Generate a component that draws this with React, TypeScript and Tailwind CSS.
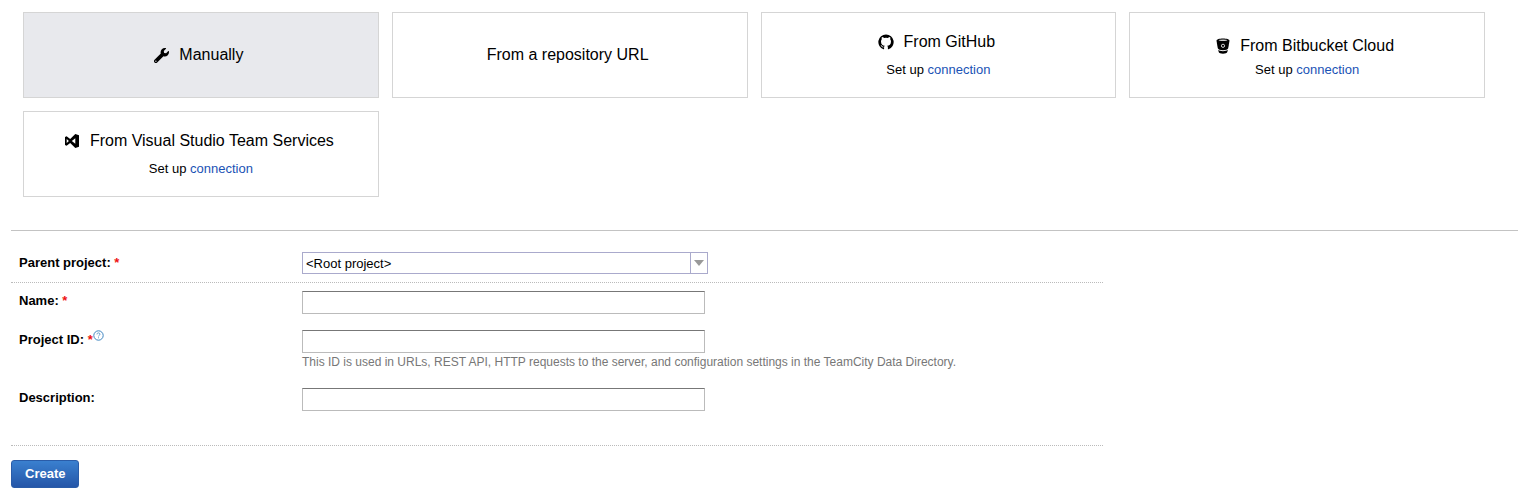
import type { ReactNode } from "react";
import { FaWrench } from "react-icons/fa";

function GitHubIcon() {
  return (
    <svg viewBox="0 0 16 16" className="size-4" aria-hidden="true">
      <path
        fill="currentColor"
        fillRule="evenodd"
        d="M8 .4a7.600 7.600 0 0 0-2.500 14.800c.4.100.6-.1.6-.5v-1.500c-1.900.4-2.500-.5-2.700-1-.2-.3-.5-.8-.9-1 .9-.3 1.500.5 1.800 1 .6.9 1.300.8 1.900.6.1-.5.3-.9.6-1.100C4.700 11.500 3 10.500 3 7.500c0-.9.3-1.600.8-2.200-.2-.6-.2-1.400.1-2.200.9 0 1.600.4 2.200.8a7.500 7.500 0 0 1 3.800 0c.6-.4 1.300-.8 2.200-.8.3.8.3 1.600.1 2.200.5.6.8 1.300.8 2.200 0 3-1.700 4-3.800 4.200.4.400.7 1 .7 1.700v1.300c0 .4.200.6.600.5A7.600 7.600 0 0 0 8 .4z"
      />
    </svg>
  );
}

function BucketIcon() {
  return (
    <svg viewBox="0 0 14 16" className="h-4 w-[14px]" aria-hidden="true">
      <path
        fill="currentColor"
        d="M7 0.4C3.4 0.4 0.5 1.3 0.5 2.6c0 .4.9 5.6 1.3 7.700.2 1 2.400 2 5.200 2s5-1 5.200-2c.4-2.100 1.300-7.300 1.300-7.700C13.500 1.300 10.600.4 7 .4z"
      />
      <path fill="currentColor" d="M2.200 11.800c1.200 1 2.900 1.400 4.800 1.400s3.600-.4 4.800-1.400c-.2 1-.4 1.900-.5 2.300-.3 1-2.100 1.700-4.300 1.700s-4-.7-4.300-1.700z" />
      <ellipse cx="7" cy="2.300" rx="4.300" ry="0.700" fill="#cccccc" />
      <circle cx="7" cy="7.800" r="1.600" fill="none" stroke="#ffffff" strokeWidth="0.800" />
    </svg>
  );
}

function VisualStudioIcon() {
  return (
    <svg viewBox="0 0 16 16" className="size-4" aria-hidden="true">
      <path
        fill="currentColor"
        fillRule="evenodd"
        d="M1 4l1.600-.7L6.200 6l5.100-5L15 2.300v11.400L11.300 15l-5.100-5-3.600 2.700L1 12zM11.300 5.200 7.800 8l3.500 2.800zM2.700 6v4L4.900 8z"
      />
    </svg>
  );
}

function Title({ icon, children }: { icon?: ReactNode; children: ReactNode }) {
  return (
    <span className="flex items-center gap-[10px] pr-1 text-base leading-6">
      {icon}
      {children}
    </span>
  );
}

const card = "flex h-[86px] flex-col items-center justify-center border border-[#d5d5d5]";

function ServiceCard({ icon, title, tight }: { icon: ReactNode; title: string; tight?: boolean }) {
  return (
    <div className={tight ? `${card} pt-1.5` : `${card} gap-1 pt-px`}>
      <Title icon={icon}>{title}</Title>
      <p className="text-[13px] leading-6">
        Set up{" "}
        <a href="#connection" className="text-[#1a52b5] hover:underline">
          connection
        </a>
      </p>
    </div>
  );
}

function Label({ htmlFor, required, children }: { htmlFor: string; required?: boolean; children: ReactNode }) {
  return (
    <label htmlFor={htmlFor} className="font-bold">
      {children}
      {required && <span className="text-[#ee1111]"> *</span>}
    </label>
  );
}

const row = "grid grid-cols-[283px_1fr] px-2";
const field =
  "block h-[23px] w-[403px] border border-[#bbbbbb] border-t-[#777777] bg-white px-1 text-[13px] outline-none focus:border-[#1a52b5]";

export default function App() {
  return (
    <main className="bg-white pt-3 font-['Liberation_Sans',Arial,sans-serif] text-[13px] leading-5 text-black">
      <section className="grid grid-cols-4 gap-[13px] pr-[33px] pl-[23px]">
        <button type="button" aria-pressed="true" className={`${card} bg-[#e8e9ed]`}>
          <Title icon={<FaWrench className="size-[15px]" />}>Manually</Title>
        </button>
        <button type="button" aria-pressed="false" className={card}>
          <Title>From a repository URL</Title>
        </button>
        <ServiceCard icon={<GitHubIcon />} title="From GitHub" />
        <ServiceCard icon={<BucketIcon />} title="From Bitbucket Cloud" tight />
        <ServiceCard icon={<VisualStudioIcon />} title="From Visual Studio Team Services" />
      </section>

      <form className="mt-[33px] ml-[11px] border-t border-[#c3c3c3] pt-3" onSubmit={(e) => e.preventDefault()}>
        <div className="max-w-[1092px] border-b border-dotted border-[#bbbbbb]">
          <div className={`${row} items-center border-b border-dotted border-[#bbbbbb] pt-[9px] pb-2`}>
            <Label htmlFor="parent" required>
              Parent project:
            </Label>
            <div className="grid w-[406px] grid-cols-[1fr_17px] border border-[#aaaacc] text-black">
              <select
                id="parent"
                className="col-span-2 col-start-1 row-start-1 h-5 appearance-none bg-white px-[3px] pt-px text-[13px] leading-5 outline-none"
              >
                <option>&lt;Root project&gt;</option>
              </select>
              <span className="pointer-events-none col-start-2 row-start-1 flex items-center justify-center border-l border-[#aaaacc]">
                <svg viewBox="0 0 10 6" className="h-[6px] w-[10px]" aria-hidden="true">
                  <path d="M0 0h10L5 6z" fill="#999999" />
                </svg>
              </span>
            </div>
          </div>

          <div className={`${row} pt-2 pb-2`}>
            <Label htmlFor="name" required>
              Name:
            </Label>
            <input id="name" type="text" className={field} />
          </div>

          <div className={`${row} pt-2 pb-2`}>
            <div className="flex">
              <Label htmlFor="project-id" required>
                Project ID:
              </Label>
              <a href="#help" aria-label="Help on Project ID">
                <svg viewBox="0 0 11 11" className="size-[11px]" fill="none" stroke="#3d84c0" aria-hidden="true">
                  <circle cx="5.500" cy="5.500" r="4.700" strokeWidth="1" />
                  <path d="M4 4.400c0-1 .7-1.500 1.500-1.500S7 3.400 7 4.200c0 1-1.500 1.100-1.500 2.200M5.500 7.300v1" strokeWidth="0.800" />
                </svg>
              </a>
            </div>
            <div>
              <input id="project-id" type="text" className={field} />
              <p className="text-xs leading-[19px] text-[#777777]">
                This ID is used in URLs, REST API, HTTP requests to the server, and configuration settings in the
                TeamCity Data Directory.
              </p>
            </div>
          </div>

          <div className={`${row} pt-2 pb-[34px]`}>
            <Label htmlFor="description">Description:</Label>
            <input id="description" type="text" className={field} />
          </div>
        </div>

        <button
          type="submit"
          className="mt-[14px] mb-3 h-7 rounded-[3px] border border-[#2a5ca8] bg-linear-to-b from-[#3a80cf] to-[#2556a8] px-[13px] text-[13px] font-bold text-white"
        >
          Create
        </button>
      </form>
    </main>
  );
}
